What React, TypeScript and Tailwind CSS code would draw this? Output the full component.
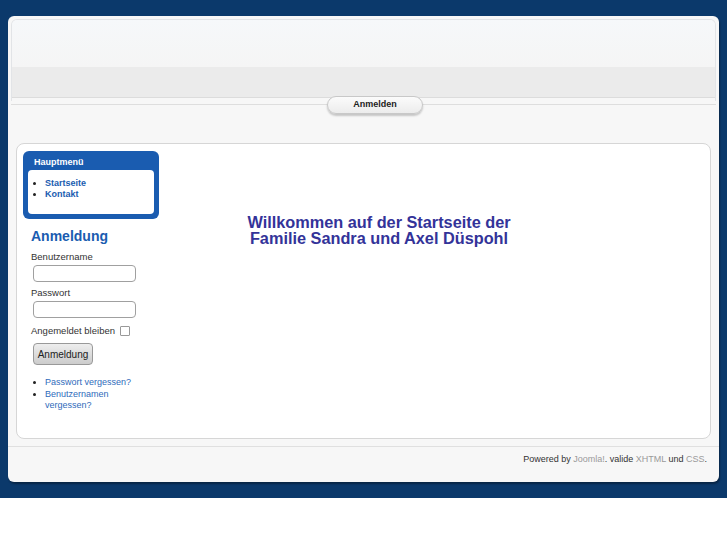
import React from 'react';

const App = () => {
  return (
    <div className="min-h-[545px] bg-white font-['Liberation_Sans',Arial,sans-serif]">
      <div className="bg-[#0b396b] px-2 pt-4 pb-4">
        <div className="rounded-md bg-[#f7f7f7] shadow-[1px_2px_2px_rgba(0,0,0,0.35)]">
          {/* header */}
          <div className="relative px-[3px] pt-[3px]">
            <div className="h-[82px] overflow-hidden rounded-t-md border border-b-0 border-[#e2e4e7]">
              <div className="h-[47px] bg-gradient-to-b from-[#f6f8fa] to-[#f5f5f5]" />
              <div className="h-[31px] border-b border-[#dcdcdc] bg-[#ebebeb]" />
            </div>
            <div className="mt-[3px] border-t border-[#dedede]" />
            <div className="absolute left-[319px] top-[80px] flex h-[18px] w-[96px] items-center justify-center rounded-full border border-[#c8c8c8] bg-gradient-to-b from-[#fbfbfb] to-[#ececec] text-[9px] font-bold text-[#222] shadow-[0_2px_2px_rgba(0,0,0,0.2)]">
              Anmelden
            </div>
          </div>

          {/* content */}
          <div className="px-2 pt-[38px]">
            <div className="flex h-[296px] rounded-lg border border-[#d6d6d6] bg-white px-[6px] pt-[7px]">
              <div className="w-[136px] shrink-0">
                <div className="rounded-md bg-[#1a5cb0] px-[5px] pb-[5px]">
                  <div className="pt-[6px] pb-[2px] pl-[6px] text-[9px] leading-[11px] font-bold text-white">Hauptmenü</div>
                  <ul className="h-[44px] rounded bg-white pt-[8px] pl-[17px] text-[9px] leading-[11px] font-bold text-[#1a5cb0] list-disc marker:text-[#222]">
                    <li>Startseite</li>
                    <li>Kontakt</li>
                  </ul>
                </div>
                <div className="pl-2 pt-[8px] text-[#333]">
                  <h3 className="text-[14px] font-bold leading-[18px] text-[#1a5cb0]">Anmeldung</h3>
                  <div className="mt-[6px] text-[9.5px] leading-[12px]">Benutzername</div>
                  <input className="mt-[2px] ml-[2px] block h-[17px] w-[103px] rounded-sm border border-[#a0a0a0] bg-white" />
                  <div className="mt-[5px] text-[9.5px] leading-[12px]">Passwort</div>
                  <input type="password" className="mt-[2px] ml-[2px] block h-[17px] w-[103px] rounded-sm border border-[#a0a0a0] bg-white" />
                  <div className="mt-[7px] flex items-center gap-[5px] text-[9.5px] leading-[12px]">
                    Angemeldet bleiben
                    <span className="inline-block h-[10px] w-[10px] rounded-[1px] border border-[#999] bg-white" />
                  </div>
                  <button className="mt-[6px] ml-[2px] block h-[22px] w-[60px] rounded-sm border border-[#999] bg-gradient-to-b from-[#eee] to-[#ccc] text-[10px] text-[#222]">
                    Anmeldung
                  </button>
                  <ul className="mt-[12px] list-disc pl-[14px] text-[9px] leading-[11.5px] text-[#2f6bbb] marker:text-[#222]">
                    <li>Passwort vergessen?</li>
                    <li className="w-[80px]">Benutzernamen vergessen?</li>
                  </ul>
                </div>
              </div>
              <div className="w-[440px] pt-[63px] text-center">
                <h1 className="text-[16.3px] font-bold leading-[16px] text-[#333399]">
                  Willkommen auf der Startseite der
                  <br />
                  Familie Sandra und Axel Düspohl
                </h1>
              </div>
            </div>
          </div>

          {/* footer */}
          <div className="mt-[7px] border-t border-[#e0e0e0] px-3 pt-[6px] pb-[17px] text-right text-[9px] leading-[12px] text-[#333]">
            Powered by <span className="text-[#9a9a9a]">Joomla!</span>. valide{' '}
            <span className="text-[#9a9a9a]">XHTML</span> und <span className="text-[#9a9a9a]">CSS</span>.
          </div>
        </div>
      </div>
    </div>
  );
};

export default App;
